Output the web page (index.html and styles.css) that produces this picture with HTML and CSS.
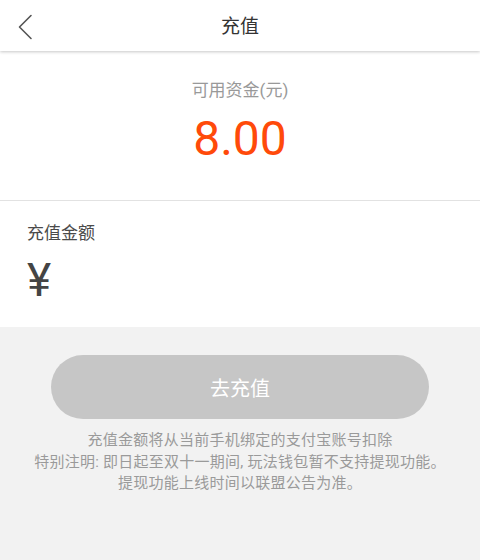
FILE: index.html
```html
<!DOCTYPE html>
<html lang="zh-CN">
<head>
<meta charset="utf-8">
<title>充值</title>
<link rel="stylesheet" href="styles.css">
</head>
<body>
<div class="page">
  <header class="topbar">
    <div class="back">
      <svg width="16" height="26" viewBox="0 0 16 26"><path d="M14 1.5 L2.5 13 L14 24.5" fill="none" stroke="#555" stroke-width="1.6" stroke-linecap="round" stroke-linejoin="round"/></svg>
    </div>
    <div class="title">充值</div>
    <div></div>
  </header>
  <section class="balance">
    <div class="balance-label">可用资金(元)</div>
    <div class="balance-amount">8.00</div>
  </section>
  <section class="recharge">
    <div class="recharge-label">充值金额</div>
    <div class="recharge-input">¥</div>
  </section>
  <section class="actions">
    <div class="btn">去充值</div>
    <div class="notes">
      <p>充值金额将从当前手机绑定的支付宝账号扣除</p>
      <p>特别注明: 即日起至双十一期间, 玩法钱包暂不支持提现功能。</p>
      <p>提现功能上线时间以联盟公告为准。</p>
    </div>
  </section>
</div>
</body>
</html>
```
FILE: styles.css
```css
html, body {
  margin: 0;
  padding: 0;
}
body {
  background: #f2f2f2;
  font-family: "Roboto", "Noto Sans CJK SC", sans-serif;
}
.page {
  width: 480px;
  height: 560px;
  overflow: hidden;
  display: flex;
  flex-direction: column;
}
.topbar {
  height: 51px;
  background: #fff;
  display: grid;
  grid-template-columns: 60px 1fr 60px;
  align-items: center;
  box-shadow: 0 1px 3px rgba(0, 0, 0, 0.22);
  position: relative;
  z-index: 1;
}
.back {
  display: flex;
  align-items: center;
  padding-left: 17px;
  height: 100%;
}
.back svg {
  display: block;
}
.title {
  text-align: center;
  font-size: 19px;
  color: #333;
  line-height: 53px;
}
.balance {
  background: #fff;
  padding: 27px 0 33px;
  text-align: center;
  border-bottom: 1px solid #e2e2e2;
}
.balance-label {
  font-size: 17px;
  line-height: 24px;
  color: #999;
}
.balance-amount {
  margin-top: 9px;
  font-size: 48px;
  line-height: 56px;
  color: #ff4a0a;
}
.recharge {
  background: #fff;
  padding: 20px 27px 19px;
}
.recharge-label {
  font-size: 17px;
  line-height: 24px;
  color: #4a4a4a;
}
.recharge-input {
  margin-top: 7px;
  font-size: 46px;
  line-height: 56px;
  color: #444;
}
.actions {
  flex: 1;
  padding: 28px 0 0;
}
.btn {
  margin: 0 51px;
  height: 64px;
  border-radius: 32px;
  background: #c6c6c6;
  color: #fff;
  font-size: 20px;
  display: flex;
  align-items: center;
  justify-content: center;
}
.notes {
  margin-top: 11px;
  text-align: center;
  font-size: 15px;
  line-height: 21.5px;
  letter-spacing: 0.25px;
  color: #9a9a9a;
}
.notes p {
  margin: 0;
}
```
